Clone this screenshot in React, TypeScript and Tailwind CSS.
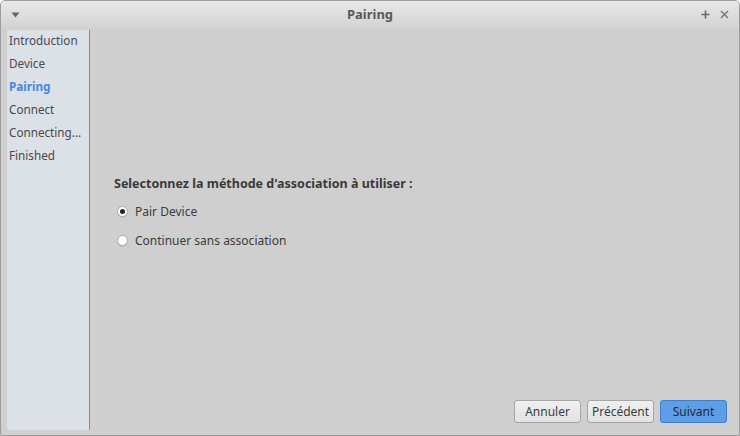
const STEPS = ['Introduction', 'Device', 'Pairing', 'Connect', 'Connecting...', 'Finished'];

function Radio({ checked }: { checked: boolean }) {
  return (
    <span className="flex h-[11px] w-[11px] items-center justify-center rounded-full border border-[#a9a9a9] bg-white shadow-[0_1px_0_rgba(0,0,0,0.05)]">
      {checked && <span className="h-[5px] w-[5px] rounded-full bg-[#222]" />}
    </span>
  );
}

export default function App() {
  return (
    <div
      className="flex h-[436px] w-[740px] flex-col overflow-hidden rounded-t-[5px] border border-[#9c9c9c] bg-[#cfcfcf] text-[#3c3c3c]"
      style={{ fontFamily: '"Noto Sans", "Open Sans", sans-serif' }}
    >
      {/* title bar */}
      <div className="relative flex h-[28px] shrink-0 items-center bg-gradient-to-b from-[#e8e8e8] to-[#d2d2d2]">
        <svg className="absolute left-[10px] top-[11px]" width="9" height="6" viewBox="0 0 9 6">
          <path d="M0.5 0.5h8L4.5 5.5z" fill="#666" />
        </svg>
        <div className="w-full text-center text-[13px] font-bold text-[#5a5a5a]">Pairing</div>
        <svg className="absolute right-[29px] top-[9px]" width="9" height="9" viewBox="0 0 9 9">
          <path d="M4.5 0.5v8M0.5 4.5h8" stroke="#6a6a6a" strokeWidth="1.6" />
        </svg>
        <svg className="absolute right-[10px] top-[9px]" width="9" height="9" viewBox="0 0 9 9">
          <path d="M1 1l7 7M8 1l-7 7" stroke="#7a7a7a" strokeWidth="1.5" />
        </svg>
      </div>

      <div className="flex min-h-0 flex-1 pb-[5px] pl-[6px] pt-[1px]">
        {/* steps */}
        <div className="flex w-[83px] shrink-0 flex-col border-r border-[#8c8c8c] bg-[#dce0e7] pl-[2px] pt-[1px] text-[11.7px]">
          {STEPS.map((s) => (
            <div
              key={s}
              className={`h-[23px] leading-[18px] ${s === 'Pairing' ? 'font-bold text-[#3f8ae2]' : 'text-[#4a4a4a]'}`}
            >
              {s}
            </div>
          ))}
        </div>

        {/* page */}
        <div className="flex flex-1 flex-col pl-[24px] pr-[12px]">
          <div className="flex flex-1 flex-col justify-center text-[12px]">
            <div className="mb-[4px] text-[12.5px] font-bold text-[#3a3a3a]">
              Selectonnez la méthode d'association à utiliser :
            </div>
            <label className="flex h-[29px] items-center gap-[7px] pl-[3px]">
              <Radio checked />
              <span>Pair Device</span>
            </label>
            <label className="flex h-[29px] items-center gap-[7px] pl-[3px]">
              <Radio checked={false} />
              <span>Continuer sans association</span>
            </label>
          </div>
          <div className="flex justify-end gap-[6px] pb-[7px] text-[12px]">
            <button className="h-[23px] w-[67px] rounded-[3px] border border-[#a6a6a6] bg-gradient-to-b from-[#f0f0f0] to-[#e2e2e2] text-[#3c3c3c]">
              Annuler
            </button>
            <button className="h-[23px] w-[67px] rounded-[3px] border border-[#a6a6a6] bg-gradient-to-b from-[#f0f0f0] to-[#e2e2e2] text-[#3c3c3c]">
              Précédent
            </button>
            <button className="h-[23px] w-[67px] rounded-[3px] border border-[#3f7fcc] bg-[#5e9ee6] text-[#1d2a3a]">
              Suivant
            </button>
          </div>
        </div>
      </div>
    </div>
  );
}
